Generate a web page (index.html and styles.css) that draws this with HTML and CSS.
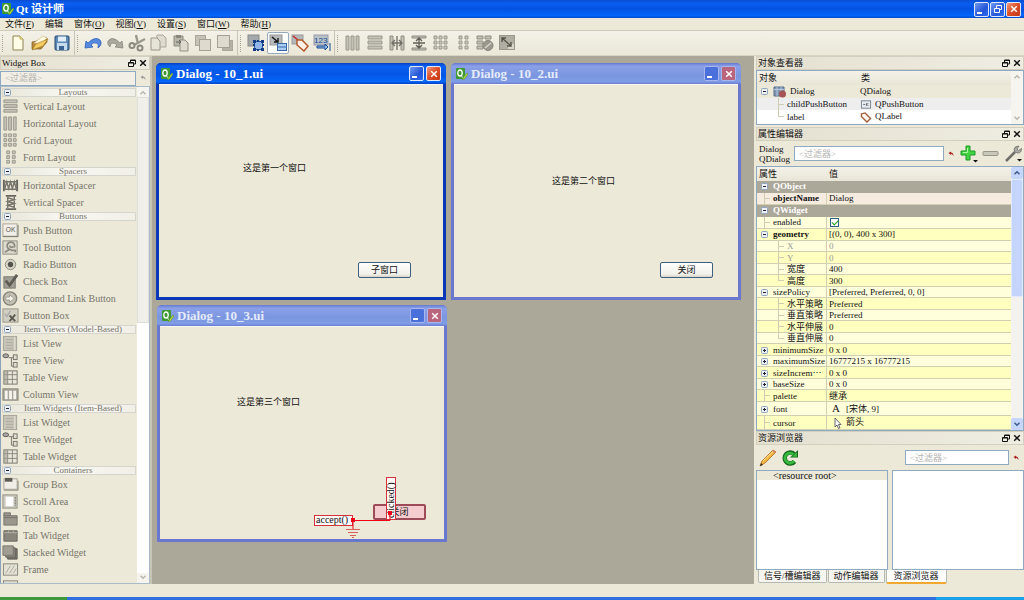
FILE: index.html
```html
<!DOCTYPE html>
<html lang="zh-CN">
<head>
<meta charset="utf-8">
<title>Qt 设计师</title>
<link rel="stylesheet" href="styles.css">
</head>
<body>
<svg class="defs" aria-hidden="true">
  <defs>
    <symbol id="qt" viewBox="0 0 12 12"><rect width="9" height="11" rx="1" fill="#3f9a34"/><ellipse cx="4" cy="5" rx="2.2" ry="3" fill="none" stroke="#fff" stroke-width="1.3"/><path d="M5 7l1.500 2.500" stroke="#fff"/><path d="M7 10l4-5 1 1-3.500 5-2 .8z" fill="#b9dd3c" stroke="#4a8a20" stroke-width=".5"/></symbol>
    <symbol id="float" viewBox="0 0 8 8"><path d="M2.500 3V1h5v4H5.500M2.500 1.500h5M.5 3.500h5v4h-5zM.5 4h5" fill="none" stroke="#111"/></symbol>
    <symbol id="cross" viewBox="0 0 8 8"><path d="M1.200 1.200l5.600 5.600M6.800 1.200L1.200 6.800" fill="none" stroke="currentColor" stroke-width="1.500"/></symbol>
    <symbol id="clear" viewBox="0 0 6 6"><path d="M.5 2L3 .5v1q2.500 0 2.500 3.500-1-2-2.500-2v1z" fill="currentColor"/></symbol>
    <symbol id="up" viewBox="0 0 8 8"><path d="M1.500 5.200L4 2.800l2.500 2.400" fill="none" stroke="currentColor" stroke-width="1.500"/></symbol>
    <symbol id="down" viewBox="0 0 8 8"><path d="M1.500 2.800L4 5.200l2.500-2.400" fill="none" stroke="currentColor" stroke-width="1.500"/></symbol>
    <symbol id="minus" viewBox="0 0 7 7"><rect x=".5" y=".5" width="6" height="6" rx="1" fill="#edf1f5" stroke="#8ea4bd"/><path d="M2 3.500h3" stroke="#223"/></symbol>
    <symbol id="plus" viewBox="0 0 7 7"><rect x=".5" y=".5" width="6" height="6" rx="1" fill="#edf1f5" stroke="#8ea4bd"/><path d="M2 3.500h3M3.500 2v3" stroke="#223"/></symbol>

    <symbol id="new" viewBox="0 0 18 18"><path d="M4 2h7l3 3v11H4z" fill="#fffde6" stroke="#8d8352"/><path d="M11 2v3h3" fill="#f5eea0" stroke="#b8a850"/></symbol>
    <symbol id="open" viewBox="0 0 18 18"><path d="M1 15V8l5-1 6-4 4 1v4l-6 7z" fill="#b98a3c" stroke="#7c5a1c" stroke-width=".7"/><path d="M3 9l9-7 4 2-6 6z" fill="#fff8dc" stroke="#c9b98a" stroke-width=".5"/><path d="M1 16l4-6 12-5-5 7z" fill="#f6cf62" stroke="#a97c27" stroke-width=".7"/></symbol>
    <symbol id="save" viewBox="0 0 18 18"><rect x="2" y="2" width="14" height="14" rx="1" fill="#5c88b5" stroke="#22466f"/><path d="M5 2.500h8v5H5z" fill="#dfeefa"/><path d="M4 9h10v7H4z" fill="#c4dbee"/><path d="M6 12h5v4H6z" fill="#376291"/></symbol>
    <symbol id="undo" viewBox="0 0 18 18"><path d="M1 14l1-7 2 2q7-7 12-3 3 4-2 8 1-5-2-5-3-1-5 2l2 2z" fill="#5689df" stroke="#2b5eb8" stroke-width=".8"/></symbol>
    <symbol id="redo" viewBox="0 0 18 18"><path d="M17 14l-1-7-2 2Q7 2 3 6q-3 3 1 7 0-4 3-4 2 0 4 2l-2 2z" fill="#aaa79c" stroke="#89877d" stroke-width=".8"/></symbol>
    <symbol id="cut" viewBox="0 0 18 18"><path d="M8 1l2 9M17 5L6 11" stroke="#9b998e" stroke-width="2.400"/><circle cx="4" cy="11.500" r="2.500" fill="none" stroke="#8b897f" stroke-width="2"/><circle cx="12" cy="14" r="2.500" fill="none" stroke="#8b897f" stroke-width="2"/></symbol>
    <symbol id="copy" viewBox="0 0 18 18"><path d="M7 1h6l3 3v9H7z" fill="#dedbce" stroke="#aaa79a"/><path d="M1 4h6l3 3v9H1z" fill="#e6e3d7" stroke="#99968a"/></symbol>
    <symbol id="paste" viewBox="0 0 18 18"><path d="M2 2h9v10H2z" fill="#b8b5a9" stroke="#8f8c82"/><path d="M4 1h5v3H4z" fill="#88867d"/><path d="M8 6h5l3 3v8H8z" fill="#dedbce" stroke="#918e83"/><path d="M4 8h5l-2-2M9 8l-2 2" fill="none" stroke="#66645d"/></symbol>
    <symbol id="back" viewBox="0 0 18 18"><rect x="1.500" y="1.500" width="10" height="10" fill="#c5c2b5" stroke="#aaa79a"/><rect x="5.500" y="5.500" width="11" height="11" fill="#dedbce" stroke="#a3a094"/></symbol>
    <symbol id="front" viewBox="0 0 18 18"><rect x="6.500" y="6.500" width="10" height="10" fill="#b4b1a5" stroke="#aaa79a"/><rect x="1.500" y="1.500" width="12" height="12" fill="#dedbce" stroke="#a3a094"/></symbol>
    <symbol id="edit-w" viewBox="0 0 18 18"><rect x="1" y="1" width="11" height="11" fill="#a4a9ac" stroke="#8a8a8a"/><rect x="7.500" y="7.500" width="8" height="8" fill="#92b6e8" stroke="#2257a8"/><path d="M6 6h3v3H6zM14 6h3v3h-3zM6 14h3v3H6zM14 14h3v3h-3zM10 6h2v2h-2zM10 15h2v2h-2zM6 10h2v2H6zM15 10h2v2h-2z" fill="#123d86"/></symbol>
    <symbol id="edit-s" viewBox="0 0 18 18"><rect x="1" y="1" width="12" height="10" fill="#b4b8ba" stroke="#999"/><rect x="8.500" y="9.500" width="9" height="7" fill="#a9cdf3" stroke="#3867a6"/><path d="M9 13h8" stroke="#3867a6"/><path d="M3 3l6 5M9 4v4H5" fill="none" stroke="#111" stroke-width="1.300"/></symbol>
    <symbol id="edit-b" viewBox="0 0 18 18"><rect x="1" y="1" width="11" height="9" fill="#b4b8ba" stroke="#999"/><path d="M2 2l5 4" stroke="#c22" stroke-width="1.500"/><path d="M6 6l5 0 6 6-4 5-7-6z" fill="#fff1e7" stroke="#b4592e" stroke-width="1.500"/></symbol>
    <symbol id="edit-t" viewBox="0 0 18 18"><rect x="1" y="1" width="14" height="10" fill="#b9c1c8" stroke="#99a"/><text x="1" y="9" font-family="Liberation Sans" font-size="8" fill="#164b94">123</text><path d="M4 12h8v-2l3 3-3 3v-2H4zM17 9v8" fill="#8bb4e5" stroke="#174b94"/></symbol>
    <symbol id="cols" viewBox="0 0 18 18"><path d="M2 2h3v14H2zM7 2h3v14H7zM12 2h3v14h-3z" fill="#c3c0b4" stroke="#9a988d"/></symbol>
    <symbol id="rows" viewBox="0 0 18 18"><path d="M2 2h14v3H2zM2 7h14v3H2zM2 12h14v3H2z" fill="#c3c0b4" stroke="#9a988d"/></symbol>
    <symbol id="hsplit" viewBox="0 0 18 18"><path d="M2 2h3v14H2zM13 2h3v14h-3z" fill="#c3c0b4" stroke="#908e84"/><path d="M9 2v14M5 9h8M7 6L4 9l3 3M11 6l3 3-3 3" fill="none" stroke="#6f6d65" stroke-width="1.300"/></symbol>
    <symbol id="vsplit" viewBox="0 0 18 18"><path d="M2 2h14v2H2zM2 14h14v2H2z" fill="#c3c0b4" stroke="#908e84"/><path d="M3 9h12M9 5v8M6 7l3-3 3 3M6 11l3 3 3-3" fill="none" stroke="#5f5d56" stroke-width="1.300"/></symbol>
    <symbol id="grid" viewBox="0 0 18 18"><path d="M2 2h3v3H2zM7 2h3v3H7zM12 2h3v3h-3zM2 7h3v3H2zM7 7h3v3H7zM12 7h3v3h-3zM2 12h3v3H2zM7 12h3v3H7zM12 12h3v3h-3z" fill="#cbc8bc" stroke="#9a988d"/></symbol>
    <symbol id="form" viewBox="0 0 18 18"><path d="M5 2h3v3H5zM11 2h3v3h-3zM5 7h3v3H5zM11 7h3v3h-3zM5 12h3v3H5zM11 12h3v3h-3z" fill="#cbc8bc" stroke="#9a988d"/></symbol>
    <symbol id="break" viewBox="0 0 18 18"><path d="M1 2h6v3H1zM9 2h6v3H9zM1 7h6v3H1zM1 12h6v3H1z" fill="#c3c0b4" stroke="#908e84"/><circle cx="12" cy="11.500" r="5" fill="#9b998f" stroke="#85837a"/><path d="M9 14l6-5" stroke="#d8d5c9" stroke-width="1.500"/></symbol>
    <symbol id="adjust" viewBox="0 0 18 18"><rect x="1.500" y="1.500" width="15" height="14" fill="#b0aea3" stroke="#9a988d"/><rect x="10" y="10" width="6" height="5" fill="#d8d5c9"/><path d="M4 4l9 8M4 8V4h4M13 8v4H9" fill="none" stroke="#55534c" stroke-width="1.400"/></symbol>

    <symbol id="w-hsp" viewBox="0 0 18 18"><path d="M2 3v12M16 3v12" stroke="#67655d" stroke-width="2"/><path d="M3 12l2-7 2 7 2-7 2 7 2-7 2 7M3 5h12M3 13h12" fill="none" stroke="#77756c" stroke-width="1.500"/></symbol>
    <symbol id="w-vsp" viewBox="0 0 18 18"><path d="M4 2h11M4 16h11" stroke="#67655d" stroke-width="2"/><path d="M6 4l7 2-7 2 7 2-7 2 7 2M6 3v12M13 3v12" fill="none" stroke="#77756c" stroke-width="1.500"/></symbol>
    <symbol id="w-push" viewBox="0 0 18 18"><rect x="1" y="2" width="15" height="13" fill="#f1efe7" stroke="#aaa79b"/><path d="M1 15.500h16V3" fill="none" stroke="#77756c"/><text x="4" y="11" font-family="Liberation Sans" font-size="7" fill="#55534c">OK</text></symbol>
    <symbol id="w-tool" viewBox="0 0 18 18"><rect x="1" y="2" width="15" height="14" fill="#dedbcf" stroke="#8d8b80"/><path d="M13 9A4 4 0 1 0 8 11L3 14M12 8q-3 2-4-1M9 12h5v2" fill="none" stroke="#8b897f" stroke-width="1.800"/></symbol>
    <symbol id="w-radio" viewBox="0 0 18 18"><circle cx="9" cy="9" r="5.500" fill="#d5d2c5" stroke="#8f8d83"/><circle cx="9" cy="9" r="2.800" fill="#55534d"/></symbol>
    <symbol id="w-check" viewBox="0 0 18 18"><rect x="2" y="4" width="12" height="12" fill="#a09e94" stroke="#7a786f"/><path d="M4 8l4 5 8-11" fill="none" stroke="#5d5b54" stroke-width="3"/></symbol>
    <symbol id="w-cmd" viewBox="0 0 18 18"><circle cx="8.500" cy="9" r="7" fill="#c3c0b4" stroke="#858379" stroke-width="1.500"/><path d="M4 7.500h4V5l5 4-5 4v-2.500H4z" fill="#f4f2ea" stroke="#858379" stroke-width=".7"/></symbol>
    <symbol id="w-bbox" viewBox="0 0 18 18"><rect x="1" y="2" width="16" height="14" fill="#d1cec2" stroke="#98958a"/><path d="M3 7l2 3 4-6" fill="none" stroke="#aaa" stroke-width="1.500"/><path d="M8 9l6 6M14 8l-6 7" stroke="#5c5a53" stroke-width="2"/></symbol>
    <symbol id="w-list" viewBox="0 0 18 18"><rect x="1.500" y="1.500" width="14" height="15" fill="#c8c5b9" stroke="#a5a297"/><path d="M4 5h8M4 8h8M4 11h8M4 14h8" stroke="#aca99e"/><path d="M13.500 2v14" stroke="#e7e4d8"/></symbol>
    <symbol id="w-tree" viewBox="0 0 18 18"><ellipse cx="4" cy="4" rx="3" ry="2" fill="#aaa" stroke="#55534d"/><path d="M7 6h3v9h3M10 6h3" fill="none" stroke="#77756c"/><rect x="12" y="3" width="4" height="5" fill="#dedbcf" stroke="#77756c"/><rect x="12" y="11" width="4" height="5" fill="#dedbcf" stroke="#77756c"/></symbol>
    <symbol id="w-table" viewBox="0 0 18 18"><rect x="2" y="2" width="14" height="14" fill="#e8e5da" stroke="#77756c"/><path d="M2 6h14M2 11h14M6 2v14M11 2v14" stroke="#88867c"/><path d="M2 2h4v14H2z" fill="#a09d92" opacity=".6"/></symbol>
    <symbol id="w-col" viewBox="0 0 18 18"><rect x="1" y="3" width="16" height="12" fill="#a9a69b" stroke="#88867c"/><path d="M3 5h3v9H3zM7.500 5h3v9h-3zM12 5h3v9h-3z" fill="#f6f4ed"/></symbol>
    <symbol id="w-group" viewBox="0 0 18 18"><rect x="2" y="3" width="14" height="11" fill="#f0eee6" stroke="#aaa79b"/><path d="M3 2h8v4H3z" fill="#5d5b54"/><path d="M2 15h15V5" fill="none" stroke="#85837a"/></symbol>
    <symbol id="w-scroll" viewBox="0 0 18 18"><rect x="1" y="2" width="15" height="14" fill="#cfccc0" stroke="#918e83"/><path d="M4 4h8v10H4z" fill="#fff"/><path d="M14 4v10" stroke="#66645d" stroke-dasharray="2 1"/></symbol>
    <symbol id="w-toolbox" viewBox="0 0 18 18"><path d="M2 3h7v3h7v10H2z" fill="#9a988d" stroke="#77756c"/><path d="M2 8h14M2 6h7" stroke="#77756c"/></symbol>
    <symbol id="w-tab" viewBox="0 0 18 18"><path d="M2 4h14v11H2z" fill="#88867c" stroke="#66645d"/><path d="M2 6h14M7 4v2M12 4v2" stroke="#b5b2a6"/></symbol>
    <symbol id="w-stack" viewBox="0 0 18 18"><path d="M6 5h10v11H6z" fill="#77756c" stroke="#5d5b54"/><path d="M4 4h10v10H4z" fill="#8d8b81" stroke="#66645d"/><path d="M1 2h11v10H1z" fill="#a09d92" stroke="#77756c"/></symbol>
    <symbol id="w-frame" viewBox="0 0 18 18"><rect x="1.500" y="3" width="15" height="12" fill="#e4e1d5" stroke="#88867c"/><path d="M4 13l5-8M8 13l5-8M12 13l3-5" stroke="#aaa79b"/></symbol>
    <symbol id="tag" viewBox="0 0 12 12"><path d="M1 2l4-1 6 6-4 4-6-6z" fill="#fff6ef" stroke="#a5603c" stroke-width="1.500"/></symbol>
    <symbol id="dlg" viewBox="0 0 14 12"><path d="M1 1h10v9H1z" fill="#7f94b2" stroke="#586c8b"/><path d="M1 3.500h10M4 1v9M8 1v9" stroke="#b5c7dd"/><circle cx="9.500" cy="8" r="3.500" fill="#a65356"/></symbol>
    <symbol id="ok" viewBox="0 0 12 12"><rect x="1" y="2" width="10" height="8" fill="#e6ebf0" stroke="#76818c"/><path d="M3 6h2M6.500 4.500v3M8.500 4.500L7 6l1.500 1.500" stroke="#445" fill="none" stroke-width=".8"/></symbol>
    <symbol id="add" viewBox="0 0 18 18"><path d="M6 1h4v5h5v4h-5v5H6v-5H1V6h5z" fill="#43d443" stroke="#1c9a24"/><path d="M7.500 3v4.500H3" fill="none" stroke="#b4f5a8"/><path d="M13 15h5l-2.500 2.500z" fill="#111"/></symbol>
    <symbol id="remove" viewBox="0 0 18 18"><rect x="1" y="6.500" width="15" height="4" rx="1" fill="#c9c6ba" stroke="#98958a"/></symbol>
    <symbol id="wrench" viewBox="0 0 18 18"><path d="M2 16l9-9" stroke="#706f69" stroke-width="2.500"/><path d="M15 1l-2 3 1.500 1.500 3-2q0 4.500-3.500 4.500-4 0-4-3.500Q10.500 1 15 1z" fill="#aaa9a3" stroke="#706f69" stroke-width=".8"/><path d="M13 14h5l-2.500 2.500z" fill="#111"/></symbol>
    <symbol id="pencil" viewBox="0 0 18 18"><path d="M1 17l2-5L14 1l3 2L6 14z" fill="#f3b33e" stroke="#a96c19" stroke-width=".8"/><path d="M1 17l1-3 2 2z" fill="#333"/><path d="M13 2l3 2 1-1-3-2z" fill="#de7f6f"/><path d="M4 12L14 2.500" stroke="#ffe29a"/></symbol>
    <symbol id="reload" viewBox="0 0 18 18"><path d="M13.500 12.500A5.500 5.500 0 1 1 13 5" fill="none" stroke="#17661f" stroke-width="4.500"/><path d="M9 8.500h8V1z" fill="#17661f"/><path d="M13 12A5 5 0 1 1 12.500 5.500" fill="none" stroke="#35b83c" stroke-width="2.800"/><path d="M11 7.700h5V3z" fill="#35b83c"/></symbol>
    <symbol id="arrow" viewBox="0 0 12 12"><path d="M3 1v9l2-2 1.500 3.500 1.500-.7L6.500 7.500H9z" fill="#fff" stroke="#445" stroke-width=".8"/></symbol>
  </defs>
</svg>

<header class="titlebar">
  <svg class="i12"><use href="#qt"/></svg><h1>Qt 设计师</h1>
  <div class="winbtns">
    <button class="wb min" aria-label="最小化"></button>
    <button class="wb" aria-label="还原"><svg class="i8"><path d="M2.500 3V.5h5v4H5.500M.5 3.500h5v4h-5z" fill="none" stroke="#fff"/></svg></button>
    <button class="wb close" aria-label="关闭"><svg class="i8"><use href="#cross"/></svg></button>
  </div>
</header>
<nav class="menubar">
  <button>文件(<u>F</u>)</button><button>编辑</button><button>窗体(<u>O</u>)</button><button>视图(<u>V</u>)</button><button>设置(<u>S</u>)</button><button>窗口(<u>W</u>)</button><button>帮助(<u>H</u>)</button>
</nav>
<div class="toolbar">
  <div class="group">
    <button aria-label="新建"><svg><use href="#new"/></svg></button><button aria-label="打开"><svg><use href="#open"/></svg></button><button aria-label="保存"><svg><use href="#save"/></svg></button>
  </div>
  <div class="group">
    <button aria-label="撤销"><svg><use href="#undo"/></svg></button><button aria-label="重做"><svg><use href="#redo"/></svg></button><button aria-label="剪切"><svg><use href="#cut"/></svg></button><button aria-label="复制"><svg><use href="#copy"/></svg></button><button aria-label="粘贴"><svg><use href="#paste"/></svg></button><button aria-label="置后"><svg><use href="#back"/></svg></button><button aria-label="置前"><svg><use href="#front"/></svg></button>
  </div>
  <div class="group">
    <button aria-label="编辑控件"><svg><use href="#edit-w"/></svg></button><button class="on" aria-label="编辑信号/槽"><svg><use href="#edit-s"/></svg></button><button aria-label="编辑伙伴"><svg><use href="#edit-b"/></svg></button><button aria-label="编辑顺序"><svg><use href="#edit-t"/></svg></button>
  </div>
  <div class="group">
    <button aria-label="水平布局"><svg><use href="#cols"/></svg></button><button aria-label="垂直布局"><svg><use href="#rows"/></svg></button><button aria-label="水平分裂"><svg><use href="#hsplit"/></svg></button><button aria-label="垂直分裂"><svg><use href="#vsplit"/></svg></button><button aria-label="栅格布局"><svg><use href="#grid"/></svg></button><button aria-label="表单布局"><svg><use href="#form"/></svg></button><button aria-label="打破布局"><svg><use href="#break"/></svg></button><button aria-label="调整大小"><svg><use href="#adjust"/></svg></button>
  </div>
</div>

<main class="main">
  <aside class="dock left">
    <div class="docktitle"><h2>Widget Box</h2><button aria-label="浮动"><svg class="i8"><use href="#float"/></svg></button><button aria-label="关闭"><svg class="i8"><use href="#cross"/></svg></button></div>
    <div class="filterrow"><input type="text" placeholder="&lt;过滤器&gt;" aria-label="过滤控件"><button aria-label="清除"><svg class="i6"><use href="#clear"/></svg></button></div>
    <div class="listwrap">
      <div class="wlist">
        <button class="cat"><svg><use href="#minus"/></svg><span>Layouts</span></button>
        <button class="item"><svg><use href="#rows"/></svg>Vertical Layout</button>
        <button class="item"><svg><use href="#cols"/></svg>Horizontal Layout</button>
        <button class="item"><svg><use href="#grid"/></svg>Grid Layout</button>
        <button class="item"><svg><use href="#form"/></svg>Form Layout</button>
        <button class="cat"><svg><use href="#minus"/></svg><span>Spacers</span></button>
        <button class="item"><svg><use href="#w-hsp"/></svg>Horizontal Spacer</button>
        <button class="item"><svg><use href="#w-vsp"/></svg>Vertical Spacer</button>
        <button class="cat"><svg><use href="#minus"/></svg><span>Buttons</span></button>
        <button class="item"><svg><use href="#w-push"/></svg>Push Button</button>
        <button class="item"><svg><use href="#w-tool"/></svg>Tool Button</button>
        <button class="item"><svg><use href="#w-radio"/></svg>Radio Button</button>
        <button class="item"><svg><use href="#w-check"/></svg>Check Box</button>
        <button class="item"><svg><use href="#w-cmd"/></svg>Command Link Button</button>
        <button class="item"><svg><use href="#w-bbox"/></svg>Button Box</button>
        <button class="cat"><svg><use href="#minus"/></svg><span>Item Views (Model-Based)</span></button>
        <button class="item"><svg><use href="#w-list"/></svg>List View</button>
        <button class="item"><svg><use href="#w-tree"/></svg>Tree View</button>
        <button class="item"><svg><use href="#w-table"/></svg>Table View</button>
        <button class="item"><svg><use href="#w-col"/></svg>Column View</button>
        <button class="cat"><svg><use href="#minus"/></svg><span>Item Widgets (Item-Based)</span></button>
        <button class="item"><svg><use href="#w-list"/></svg>List Widget</button>
        <button class="item"><svg><use href="#w-tree"/></svg>Tree Widget</button>
        <button class="item"><svg><use href="#w-table"/></svg>Table Widget</button>
        <button class="cat"><svg><use href="#minus"/></svg><span>Containers</span></button>
        <button class="item"><svg><use href="#w-group"/></svg>Group Box</button>
        <button class="item"><svg><use href="#w-scroll"/></svg>Scroll Area</button>
        <button class="item"><svg><use href="#w-toolbox"/></svg>Tool Box</button>
        <button class="item"><svg><use href="#w-tab"/></svg>Tab Widget</button>
        <button class="item"><svg><use href="#w-stack"/></svg>Stacked Widget</button>
        <button class="item"><svg><use href="#w-frame"/></svg>Frame</button>
        <button class="item"><svg><use href="#w-frame"/></svg>Widget</button>
      </div>
      <div class="sbar pale"><svg class="i8"><use href="#up"/></svg><div class="thumb"></div><div class="track"></div><svg class="i8"><use href="#down"/></svg></div>
    </div>
  </aside>

  <section class="canvas">
    <article class="win active w1">
      <div class="wtitle"><svg class="i12"><use href="#qt"/></svg><h3>Dialog - 10_1.ui</h3><button class="wb min" aria-label="最小化"></button><button class="wb close" aria-label="关闭"><svg class="i8"><use href="#cross"/></svg></button></div>
      <div class="wbody"><span class="lbl l1">这是第一个窗口</span><button class="push p1">子窗口</button></div>
    </article>
    <article class="win w2">
      <div class="wtitle"><svg class="i12"><use href="#qt"/></svg><h3>Dialog - 10_2.ui</h3><button class="wb min" aria-label="最小化"></button><button class="wb close" aria-label="关闭"><svg class="i8"><use href="#cross"/></svg></button></div>
      <div class="wbody"><span class="lbl l2">这是第二个窗口</span><button class="push p2">关闭</button></div>
    </article>
    <article class="win w3">
      <div class="wtitle"><svg class="i12"><use href="#qt"/></svg><h3>Dialog - 10_3.ui</h3><button class="wb min" aria-label="最小化"></button><button class="wb close" aria-label="关闭"><svg class="i8"><use href="#cross"/></svg></button></div>
      <div class="wbody"><span class="lbl l3">这是第三个窗口</span><button class="push p3">关闭</button>
        <span class="sig accept">accept()</span><span class="sig clicked">clicked()</span>
        <svg class="wire" viewBox="0 0 54 34"><path d="M10 14.500h37v-9M10 13v10" fill="none" stroke="#f00014"/><path d="M3 23.500h14M5 26.500h10M7 29.500h6M9 31.500h2" stroke="#d9605a"/><path d="M8 12h4v4H8zM45 5h4v4h-4z" fill="#f00014"/></svg>
      </div>
    </article>
  </section>

  <aside class="dock right">
    <section>
      <div class="docktitle"><h2>对象查看器</h2><button aria-label="浮动"><svg class="i8"><use href="#float"/></svg></button><button aria-label="关闭"><svg class="i8"><use href="#cross"/></svg></button></div>
      <div class="framed objects">
        <table class="otable">
          <thead><tr><th>对象</th><th>类</th></tr></thead>
          <tbody>
            <tr class="sel"><td><svg class="i7"><use href="#minus"/></svg><svg class="dlg"><use href="#dlg"/></svg>Dialog</td><td>QDialog</td></tr>
            <tr class="alt"><td class="deep">childPushButton</td><td><svg class="i12"><use href="#ok"/></svg>QPushButton</td></tr>
            <tr><td class="deep last">label</td><td><svg class="i12"><use href="#tag"/></svg>QLabel</td></tr>
          </tbody>
        </table>
        <div class="sbar pale"><svg class="i8"><use href="#up"/></svg><div class="track"></div><svg class="i8"><use href="#down"/></svg></div>
      </div>
    </section>
    <section class="props">
      <div class="docktitle"><h2>属性编辑器</h2><button aria-label="浮动"><svg class="i8"><use href="#float"/></svg></button><button aria-label="关闭"><svg class="i8"><use href="#cross"/></svg></button></div>
      <div class="propbar"><div class="who">Dialog<br>QDialog</div><input type="text" placeholder="&lt;过滤器&gt;" aria-label="过滤属性"><button class="clr" aria-label="清除"><svg class="i6"><use href="#clear"/></svg></button><button aria-label="添加"><svg><use href="#add"/></svg></button><button aria-label="移除"><svg><use href="#remove"/></svg></button><button aria-label="配置"><svg><use href="#wrench"/></svg></button></div>
      <div class="framed grow">
        <table class="ptable">
          <thead><tr><th>属性</th><th>值</th></tr></thead>
          <tbody class="main-rows">
            <tr class="grp"><td colspan="2"><svg class="i7"><use href="#minus"/></svg>QObject</td></tr>
            <tr class="obj"><td class="leaf"><b>objectName</b></td><td>Dialog</td></tr>
            <tr class="grp"><td colspan="2"><svg class="i7"><use href="#minus"/></svg>QWidget</td></tr>
            <tr class="lt"><td class="leaf"><label for="en">enabled</label></td><td><input type="checkbox" id="en" checked></td></tr>
            <tr class="dk"><td><svg class="i7"><use href="#minus"/></svg><b>geometry</b></td><td>[(0, 0), 400 x 300]</td></tr>
          </tbody>
          <tbody class="sub-rows">
            <tr class="lt off"><td class="deep">X</td><td>0</td></tr>
            <tr class="dk off"><td class="deep">Y</td><td>0</td></tr>
            <tr class="lt"><td class="deep">宽度</td><td>400</td></tr>
            <tr class="dk"><td class="deep last">高度</td><td>300</td></tr>
            <tr class="lt"><td><svg class="i7"><use href="#minus"/></svg>sizePolicy</td><td>[Preferred, Preferred, 0, 0]</td></tr>
            <tr class="dk"><td class="deep">水平策略</td><td>Preferred</td></tr>
            <tr class="lt"><td class="deep">垂直策略</td><td>Preferred</td></tr>
            <tr class="dk"><td class="deep">水平伸展</td><td>0</td></tr>
            <tr class="lt"><td class="deep last">垂直伸展</td><td>0</td></tr>
            <tr class="dk"><td><svg class="i7"><use href="#plus"/></svg>minimumSize</td><td>0 x 0</td></tr>
            <tr class="lt"><td><svg class="i7"><use href="#plus"/></svg>maximumSize</td><td>16777215 x 16777215</td></tr>
            <tr class="dk"><td><svg class="i7"><use href="#plus"/></svg>sizeIncrem⋯</td><td>0 x 0</td></tr>
            <tr class="lt"><td><svg class="i7"><use href="#plus"/></svg>baseSize</td><td>0 x 0</td></tr>
            <tr class="dk"><td class="leaf">palette</td><td>继承</td></tr>
          </tbody>
          <tbody class="tall-rows">
            <tr class="lt"><td><svg class="i7"><use href="#plus"/></svg>font</td><td><span class="glyph">A</span>[宋体, 9]</td></tr>
            <tr class="dk"><td class="leaf">cursor</td><td><svg class="i12 cur"><use href="#arrow"/></svg>箭头</td></tr>
          </tbody>
        </table>
        <div class="sbar blue"><svg class="i8"><use href="#up"/></svg><div class="thumb"></div><div class="track"></div><svg class="i8 end"><use href="#down"/></svg></div>
      </div>
    </section>
    <section class="resources">
      <div class="docktitle"><h2>资源浏览器</h2><button aria-label="浮动"><svg class="i8"><use href="#float"/></svg></button><button aria-label="关闭"><svg class="i8"><use href="#cross"/></svg></button></div>
      <div class="resbar"><button aria-label="编辑资源"><svg><use href="#pencil"/></svg></button><button aria-label="重新加载"><svg><use href="#reload"/></svg></button><input type="text" placeholder="&lt;过滤器&gt;" aria-label="过滤资源"><button class="clr" aria-label="清除"><svg class="i6"><use href="#clear"/></svg></button></div>
      <div class="panes"><div class="pane"><div class="root">&lt;resource root&gt;</div></div><div class="pane"></div></div>
      <div class="tabs"><button>信号/槽编辑器</button><button>动作编辑器</button><button class="cur-tab">资源浏览器</button></div>
    </section>
  </aside>
</main>
<footer class="status"></footer>
<div class="taskbar"><div class="start"></div><div class="tray"></div></div>
</body>
</html>
```
FILE: styles.css
```css
* { box-sizing: border-box; }
body {
  margin: 0;
  height: 100vh;
  display: flex;
  flex-direction: column;
  overflow: hidden;
  background: #ece9d8;
  color: #111;
  font: 9px/11px "Liberation Serif", "Noto Sans CJK SC", serif;
}
button, input { font: inherit; color: inherit; }
button { margin: 0; padding: 0; border: 0; background: none; }
h1, h2, h3 { margin: 0; font-size: inherit; font-weight: normal; }
svg { display: block; flex: none; width: 18px; height: 18px; }
.defs { position: absolute; width: 0; height: 0; }
.i6 { width: 6px; height: 6px; }
.i7 { width: 7px; height: 7px; }
.i8 { width: 8px; height: 8px; }
.i12 { width: 12px; height: 12px; }

.titlebar {
  flex: none;
  height: 18px;
  display: flex;
  align-items: center;
  gap: 2px;
  padding: 0 3px 0 2px;
  background: linear-gradient(#0a4fd0, #0a5df0 20%, #0353e2 50%, #0566fb 88%, #0346c4);
  color: #fff;
}
.titlebar h1 { flex: 1; font-size: 11px; font-weight: bold; }
.winbtns { display: flex; gap: 1px; }
.wb {
  width: 15px;
  height: 15px;
  display: grid;
  place-items: center;
  border: 1px solid #dfe9fb;
  border-radius: 2px;
  background: linear-gradient(135deg, #7099f0, #2456d8 60%, #2f6cf0);
  color: #fff;
}
.wb.min { align-items: end; justify-items: start; padding: 0 0 2px 2px; }
.wb.min::before { content: ""; width: 5px; height: 2px; background: #fff; }
.wb.close { background: linear-gradient(135deg, #f09a80, #dc4d26 50%, #c4381a); }

.menubar {
  flex: none;
  height: 13px;
  display: flex;
  gap: 11px;
  padding: 0 5px;
  border-bottom: 1px solid #cfcaba;
}
.toolbar {
  flex: none;
  height: 25px;
  display: flex;
  border-bottom: 1px solid #d8d4c4;
  background: linear-gradient(#f3f1e8, #ebe8d8);
}
.group { display: flex; align-items: center; padding-left: 6px; }
.group + .group { margin-left: 1px; border-left: 1px solid #c9c5b4; }
.group::before {
  content: "";
  width: 1px;
  height: 17px;
  margin: 0 3px 0 -4px;
  border-left: 1px dotted #a5a192;
}
.group button { width: 22px; height: 22px; display: grid; place-items: center; }
.group .on { border: 1px solid #98aabf; border-radius: 2px; background: #fdfdfb; }

.main { flex: 1; min-height: 0; display: flex; }
.dock { flex: none; display: flex; flex-direction: column; min-height: 0; }
.left { width: 152px; border-right: 2px solid #c9c5b6; }
.right { width: 270px; padding-left: 2px; }
.docktitle {
  flex: none;
  height: 14px;
  display: flex;
  align-items: center;
  gap: 3px;
  padding: 0 2px 0 1px;
  border: 1px solid #d3cfbf;
  background: linear-gradient(90deg, #e4e0d0, #efede2);
}
.docktitle h2 { flex: 1; }

input[type="text"] {
  min-width: 0;
  height: 15px;
  padding: 0 4px;
  border: 1px solid #8fa9c0;
  border-radius: 0;
  background: #fff;
  outline: 0;
}
input::placeholder { color: #b5b5b0; opacity: 1; }
.filterrow { flex: none; display: flex; align-items: center; height: 16px; }
.filterrow input { flex: 1; background: #f1efe6; }
.filterrow button { width: 14px; display: grid; place-items: center; color: #999; }
.clr { color: #b02020; }

.listwrap { flex: 1; min-height: 0; display: flex; border: 1px solid #a9bac8; border-left-color: #8ba2b8; }
.wlist { flex: 1; min-width: 0; display: flex; flex-direction: column; overflow: hidden; color: #77756c; }
.cat {
  flex: none;
  height: 9px;
  margin: 1px;
  display: flex;
  align-items: center;
  border: 1px solid #d5d5cf;
  background: linear-gradient(90deg, #e9e7da, #f8f7f2 50%, #f1efe6);
  line-height: 7px;
}
.cat svg { width: 7px; height: 7px; margin-left: 1px; }
.cat span { flex: 1; white-space: nowrap; }
.item {
  flex: none;
  height: 17px;
  display: flex;
  align-items: center;
  gap: 4px;
  padding-left: 1px;
  font-size: 10px;
  white-space: nowrap;
}
.item svg { width: 17px; height: 17px; }

.sbar { flex: none; width: 12px; display: flex; flex-direction: column; align-items: center; padding: 2px 0; color: #b9b7ad; background: #f5f4ee; }
.sbar .track { flex: 1; width: 12px; }
.sbar .thumb { width: 12px; }
.left .thumb { height: 46%; border: 1px solid #dfdfda; background: #f0efe9; }
.left .track { background: #fff; }
.sbar.blue { color: #3f5c92; background: #f3f2ee; padding: 0; }
.blue svg { width: 12px; height: 12px; padding: 2px; border-radius: 2px; background: #c5d6fa; }
.blue .thumb { height: 118px; border: 1px solid #e1e9fc; border-radius: 2px; background: #c5d4fa; }

.canvas { flex: 1; min-width: 0; position: relative; overflow: hidden; background: #aca899; }
.win {
  position: absolute;
  width: 290px;
  height: 237px;
  display: flex;
  flex-direction: column;
  border: 3px solid #6a77cf;
  border-top: 0;
  border-radius: 5px 5px 0 0;
  background: #6a77cf;
}
.win.active { border-color: #0a39b8; background: #0a39b8; }
.w1 { left: 4px; top: 7px; }
.w2 { left: 299px; top: 7px; }
.w3 { left: 5px; top: 249px; }
.wtitle {
  flex: none;
  height: 21px;
  margin: 0 -3px;
  display: flex;
  align-items: center;
  gap: 1px;
  padding: 1px 5px;
  border-radius: 5px 5px 0 0;
  background: linear-gradient(#6579cf, #8ba0e8 15%, #7a96df 60%, #7f9de6 88%, #6c7dd0);
  color: #e5ebfa;
}
.active .wtitle { background: linear-gradient(#0840c0, #0a60f2 15%, #0455e4 55%, #0566fa 88%, #0340c0); color: #fff; }
.wtitle h3 { flex: 1; padding-left: 2px; font-size: 13px; font-weight: bold; line-height: 14px; }
.wtitle .wb + .wb { margin-left: 1px; }
.win:not(.active) .wb { border-color: #a9b6ee; background: #4a70dc; }
.win:not(.active) .close { background: #b9657c; }
.wbody { flex: 1; position: relative; background: #ece9d8; border-top: 1px solid #f7f6f0; }
.lbl, .push, .sig { position: absolute; white-space: nowrap; }
.l1 { left: 84px; top: 78px; }
.l2 { left: 98px; top: 91px; }
.l3 { left: 77px; top: 70px; }
.push {
  width: 53px;
  height: 16px;
  border: 1px solid #3d5f80;
  border-radius: 2px;
  background: linear-gradient(#fff, #f1f0ea 80%, #d8d3c5);
}
.p1 { left: 199px; top: 177px; }
.p2 { left: 206px; top: 177px; }
.p3 { left: 213px; top: 177px; border: 2px solid #9d4b58; background: #f5cdd0; line-height: 10px; }
.sig { border: 1px solid #d5303c; background: #fffafa; line-height: 8px; font-size: 10px; }
.accept { left: 154px; top: 188px; width: 39px; height: 11px; padding-left: 1px; }
.clicked { left: 226px; top: 150px; width: 10px; height: 43px; padding-top: 1px; writing-mode: vertical-rl; transform: rotate(180deg); }
.wire { position: absolute; left: 183px; top: 179px; width: 54px; height: 34px; }

.framed { display: flex; border: 1px solid #8fa9c0; background: #fff; }
.framed table { flex: 1; min-width: 0; table-layout: fixed; border-collapse: separate; border-spacing: 0; align-self: flex-start; }
th, td { padding: 0; font-weight: normal; text-align: left; white-space: nowrap; overflow: hidden; line-height: 10px; }
td svg { display: inline-block; vertical-align: middle; }
th { height: 14px; background: linear-gradient(#f3f1e8, #e9e6d7); padding-left: 2px; }
.objects { min-height: 55px; margin-bottom: 2px; }
.otable th:first-child { width: 102px; }
.otable td { height: 12px; line-height: 12px; }
.otable td:first-child { padding-left: 4px; }
.otable td:last-child { padding-left: 1px; }
.otable .dlg { width: 14px; height: 12px; margin: 0 3px 0 5px; }
.otable .i12 { width: 12px; height: 11px; margin-right: 3px; }
.otable td.deep { padding-left: 30px; }
.otable tr { height: 12px; }
.sel td { background-color: #ece9d8; }
.alt td { background-color: #eeeeee; }

.propbar { height: 25px; display: flex; align-items: center; padding-left: 3px; }
.who { width: 35px; line-height: 10px; }
.propbar input { flex: 1; }
.propbar button { width: 22px; display: grid; place-items: center; }
.propbar .clr { width: 14px; }
.grow { min-height: 264px; }
.ptable th:first-child { width: 70px; }
.ptable td { border-bottom: 1px solid #d2d0b2; padding-left: 2px; }
.ptable td:first-child { padding-left: 16px; border-right: 1px solid #d2d0b2; }
.ptable td:first-child > svg { margin: 0 5px 0 -12px; }
.ptable td:first-child.deep { padding-left: 30px; }
.deep {
  background-image: linear-gradient(#cfccb4, #cfccb4), linear-gradient(#cfccb4, #cfccb4);
  background-position: 21px 0, 21px 50%;
  background-size: 1px 100%, 6px 1px;
  background-repeat: no-repeat;
}
.deep.last { background-size: 1px 50%, 6px 1px; }
.leaf {
  background-image: linear-gradient(#cfccb4, #cfccb4), linear-gradient(#cfccb4, #cfccb4);
  background-position: 7px 0, 7px 50%;
  background-size: 1px 100%, 6px 1px;
  background-repeat: no-repeat;
}
.main-rows td { height: 12px; line-height: 11px; }
.sub-rows td { height: 11px; }
.sub-rows tr:nth-child(even) td { height: 12px; }
.tall-rows td { height: 14px; }
.lt td { background-color: #ffffdc; }
.dk td { background-color: #ffffbf; }
.obj td { background-color: #f5ecdf; }
.ptable .grp td { background: #aca899; color: #fff; font-weight: bold; border-color: #aca899; }
.off td { color: #999; }
.glyph { display: inline-block; width: 17px; padding-left: 3px; font-size: 11px; }
.cur { margin: 0 2px 0 3px; }
#en {
  appearance: none;
  display: block;
  width: 9px;
  height: 9px;
  margin: 1px;
  border: 1px solid #2c6286;
  background: #fff;
}
#en:checked::before { content: ""; display: block; width: 5px; height: 3px; margin: 1px; border: solid #21a121; border-width: 0 0 1px 1px; transform: rotate(-45deg); }

.resources { flex: 1; min-height: 0; display: flex; flex-direction: column; }
.resbar { flex: none; height: 25px; display: flex; align-items: center; gap: 4px; padding-left: 3px; }
.resbar input { width: 104px; margin-left: auto; }
.resbar .clr { width: 10px; margin-right: 1px; }
.panes { flex: 1; min-height: 0; display: flex; gap: 4px; }
.pane { flex: 1; border: 1px solid #8fa9c0; background: #fff; }
.root { height: 9px; padding-left: 16px; line-height: 9px; background: #ece9d8; font-size: 10px; }
.tabs { flex: none; display: flex; gap: 1px; padding-left: 2px; height: 14px; }
.tabs button { height: 13px; padding: 0 5px; border: 1px solid #b5b9b4; border-top: 0; border-radius: 0 0 2px 2px; background: #f6f5ef; }
.tabs .cur-tab { height: 14px; padding: 0 7px; background: #fff; border-bottom: 2px solid #f0a830; }

.status { flex: none; height: 13px; }
.taskbar { flex: none; height: 3px; display: flex; justify-content: space-between; background: #2f6fe0; }
.start { width: 67px; background: #3c9a3c; }
.tray { width: 88px; background: #18a0e8; }
```
